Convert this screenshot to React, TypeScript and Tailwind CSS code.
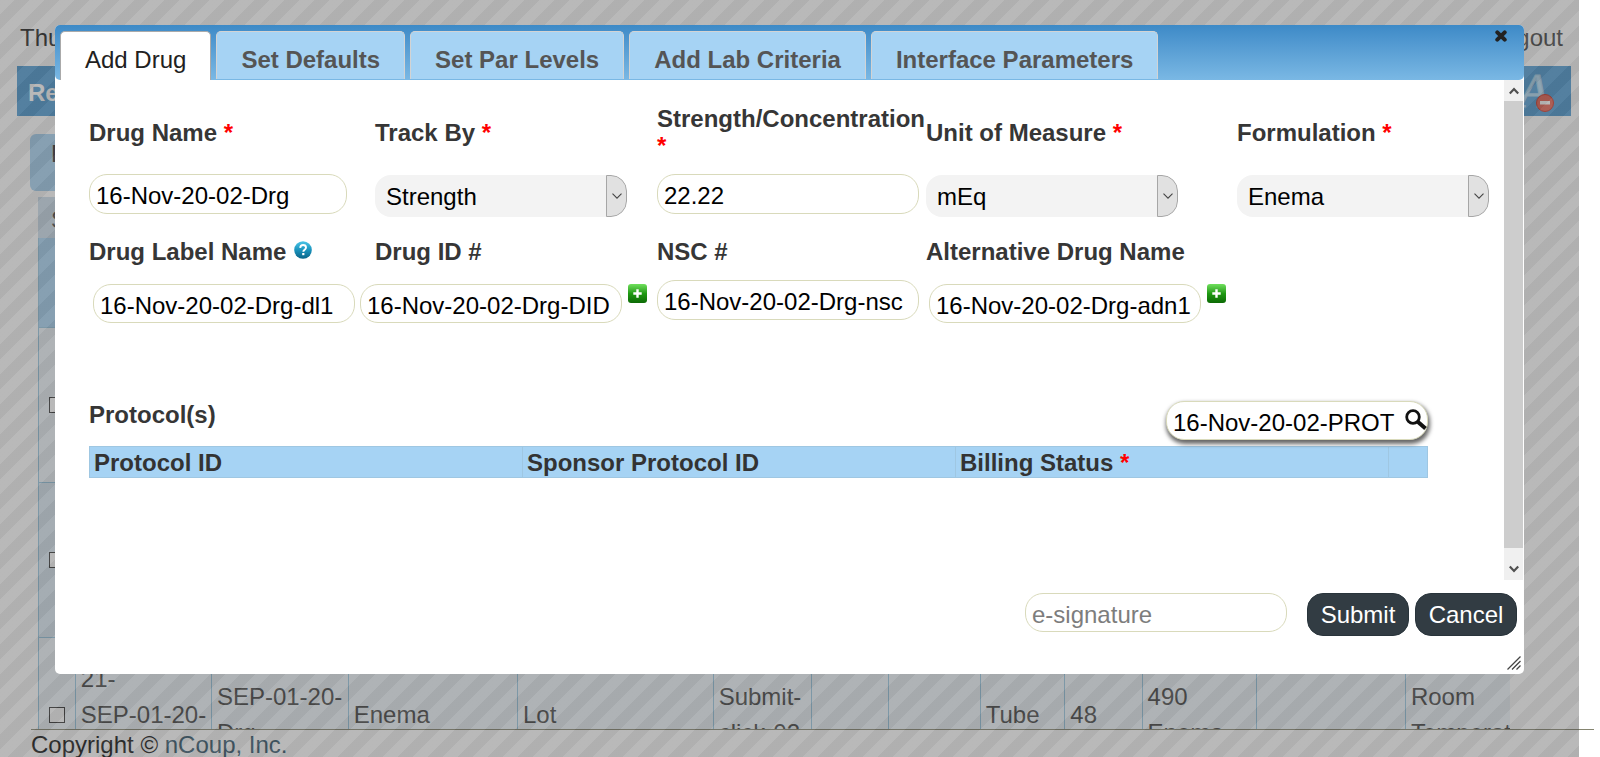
import React from "react";

const inputClass =
  "block rounded-[18px] border border-[#d9dabb] bg-white pl-[6px] pr-1 pt-1 text-2xl leading-[27px] text-black outline-none placeholder:text-[#7d7d7d]";

function Required() {
  return <span className="text-[#ff0000]">*</span>;
}

function SelectBox({ id, value }: { id: string; value: string }) {
  return (
    <div className="relative h-[42px] w-[252px] overflow-hidden rounded-[16px] bg-[#f3f3f3]">
      <select
        id={id}
        defaultValue={value}
        className="h-full w-full appearance-none bg-transparent pl-[11px] pr-6 pt-[2px] text-2xl leading-[27px] text-black outline-none"
      >
        <option>{value}</option>
      </select>
      <span className="pointer-events-none absolute inset-y-0 right-0 flex w-[21px] items-center justify-center rounded-r-[16px] border border-[#a6a6a6] bg-[#e1e1e1]">
        <svg width="10" height="6" viewBox="0 0 10 6" fill="none" stroke="#444" strokeWidth="1.1">
          <path d="M0.5 0.7 5 5.2 9.5 0.7" />
        </svg>
      </span>
    </div>
  );
}

function AddButton({ label }: { label: string }) {
  return (
    <button
      type="button"
      aria-label={label}
      className="flex h-[19px] w-[19px] shrink-0 items-center justify-center rounded-[3px] bg-linear-to-b from-[#6fe05c] via-[#1f9a12] to-[#0d6a06]"
    >
      <svg width="9" height="9" viewBox="0 0 9 9" stroke="#fff" strokeWidth="2.4">
        <path d="M4.5 0.3V8.7M0.3 4.5H8.7" />
      </svg>
    </button>
  );
}

function HelpIcon() {
  return (
    <svg width="18" height="18" viewBox="0 0 18 18" className="shrink-0">
      <defs>
        <linearGradient id="help" x1="0" y1="0" x2="0" y2="1">
          <stop offset="0" stopColor="#4cc6e8" />
          <stop offset="0.5" stopColor="#1a93bd" />
          <stop offset="1" stopColor="#0a6488" />
        </linearGradient>
      </defs>
      <circle cx="9" cy="9" r="8.8" fill="url(#help)" />
      <path d="M6.2 6.9C6.3 4.9 7.5 4 9.1 4c1.7 0 2.9 1 2.9 2.5 0 2.2-2.7 2.1-2.7 4.2" fill="none" stroke="#fff" strokeWidth="1.9" />
      <rect x="8.2" y="12" width="2.2" height="2.2" fill="#fff" />
    </svg>
  );
}

const columns =
  "grid grid-cols-[minmax(0,286fr)_minmax(0,282fr)_minmax(0,269fr)_minmax(0,311fr)_minmax(0,252fr)]";

const labelClass = "text-2xl font-bold leading-[27px] text-[#363636]";

const tabs = ["Add Drug", "Set Defaults", "Set Par Levels", "Add Lab Criteria", "Interface Parameters"];

const columnWidths = [
  "2.5%",
  "9.25%",
  "9.3%",
  "11.5%",
  "13.3%",
  "6.65%",
  "5.3%",
  "6.2%",
  "5.75%",
  "5.25%",
  "7.8%",
  "10.1%",
  "7.1%",
];

const lastRow: string[][] = [
  ["21-", "SEP-01-20-", "Drg"],
  ["SEP-01-20-", "Drg"],
  ["Enema"],
  ["Lot"],
  ["Submit-", "click-02"],
  [""],
  [""],
  ["Tube"],
  ["48"],
  ["490", "Enema"],
  [""],
  ["Room", "Temperature"],
];

function InventoryPage() {
  return (
    <div className="flex h-full flex-col">
      <main className="flex min-h-0 flex-1 flex-col overflow-hidden">
        <div className="flex h-[66px] shrink-0 items-start justify-between pl-5 pr-[37px] pt-6 text-2xl leading-[27px]">
          <span className="text-[#222]">Thu</span>
          <a href="#logout" className="text-[#444]">
            Logout
          </a>
        </div>
        <div className="ml-[17px] mr-[29px] flex h-[50px] shrink-0 items-center justify-between bg-[#4c9ad2] pl-[11px] pr-4">
          <span className="pt-[2px] text-2xl font-bold leading-[27px] text-white">Re</span>
          <svg width="42" height="46" viewBox="0 0 42 46">
            <text x="6" y="39" fontFamily="Liberation Serif, serif" fontStyle="italic" fontSize="48" fill="#b4dcf4" stroke="#a3cde8" strokeWidth="1.2">
              A
            </text>
            <circle cx="32" cy="35" r="8.5" fill="#e85f50" stroke="#d03020" strokeWidth="1" />
            <rect x="27" y="33" width="10" height="3.5" fill="#fff" />
          </svg>
        </div>
        <div className="mb-[6px] ml-[30px] mt-[18px] flex h-[57px] w-[150px] shrink-0 items-start rounded-md bg-[#a6d2f2] pl-[21px] pt-1 text-2xl text-[#333]">
          D
        </div>
        <div className="ml-[38px] mr-[90px] flex h-[41px] shrink-0 items-center bg-[#cbddec] pl-[13px] pt-[3px] text-2xl leading-[27px] text-[#444]">
          S
        </div>
        <div className="ml-[38px] mr-[90px]">
          <table className="w-full table-fixed border-collapse text-2xl leading-9 text-[#444]">
            <colgroup>
              {columnWidths.map((width, i) => (
                <col key={i} style={{ width }} />
              ))}
            </colgroup>
            <thead>
              <tr className="h-[89px] bg-[#a6d2f2]">
                <th colSpan={13} className="border-b border-l border-[#94c4e0]" />
              </tr>
            </thead>
            <tbody>
              {["bg-[#eef5f9]", "bg-[#dbe9f5]", "bg-[#eef5f9]"].map((tone, row) => (
                <tr key={row} className={`h-[155px] ${tone}`}>
                  <td className="border-b border-l border-[#94c4e0] p-0 pl-[10px]">
                    <input
                      type="checkbox"
                      aria-label={`Select row ${row + 1}`}
                      className="block h-4 w-4 appearance-none border border-[#333] bg-white"
                    />
                  </td>
                  {lastRow.map((lines, cell) => (
                    <td key={cell} className="overflow-hidden whitespace-nowrap border-b border-l border-[#94c4e0] p-0 pl-[5px]">
                      {row === 2 && lines.map((line) => <div key={line}>{line}</div>)}
                    </td>
                  ))}
                </tr>
              ))}
            </tbody>
          </table>
        </div>
      </main>
      <footer className="ml-[31px] mr-[6px] h-7 shrink-0 border-t border-[#858570] pt-[1px] text-2xl leading-[27px] text-[#111]">
        Copyright ©{" "}
        <a href="#ncoup" className="text-[#33576c]">
          nCoup, Inc.
        </a>
      </footer>
    </div>
  );
}

function DrugForm() {
  return (
    <div className="min-w-0 flex-1 pl-[34px] pr-[15px] pt-[25px]">
      <div className={`${columns} h-[54px] items-center`}>
        <label htmlFor="drug-name" className={labelClass}>
          Drug Name <Required />
        </label>
        <label htmlFor="track-by" className={labelClass}>
          Track By <Required />
        </label>
        <label htmlFor="strength" className={labelClass}>
          Strength/Concentration <Required />
        </label>
        <label htmlFor="unit" className={labelClass}>
          Unit of Measure <Required />
        </label>
        <label htmlFor="formulation" className={labelClass}>
          Formulation <Required />
        </label>
      </div>
      <div className={`${columns} mt-[15px] h-[43px] items-center`}>
        <input id="drug-name" defaultValue="16-Nov-20-02-Drg" className={`${inputClass} mb-[3px] h-10 w-[258px]`} />
        <SelectBox id="track-by" value="Strength" />
        <input id="strength" defaultValue="22.22" className={`${inputClass} mb-[3px] h-10 w-[262px]`} />
        <SelectBox id="unit" value="mEq" />
        <SelectBox id="formulation" value="Enema" />
      </div>
      <div className={`${columns} mt-[21px]`}>
        <div className="flex items-start gap-2">
          <label htmlFor="label-name" className={labelClass}>
            Drug Label Name
          </label>
          <span className="pt-[3px]">
            <HelpIcon />
          </span>
        </div>
        <label htmlFor="drug-id" className={labelClass}>
          Drug ID #
        </label>
        <label htmlFor="nsc" className={labelClass}>
          NSC #
        </label>
        <label htmlFor="alt-name" className={labelClass}>
          Alternative Drug Name
        </label>
      </div>
      <div className={`${columns} mt-[15px] h-[44px] items-start`}>
        <div className="pl-1 pt-1">
          <input id="label-name" defaultValue="16-Nov-20-02-Drg-dl1" className={`${inputClass} h-[39px] w-[262px]`} />
        </div>
        <div className="-ml-[15px] flex items-start gap-[6px] pt-1">
          <input id="drug-id" defaultValue="16-Nov-20-02-Drg-DID" className={`${inputClass} h-[39px] w-[262px]`} />
          <AddButton label="Add drug ID" />
        </div>
        <input id="nsc" defaultValue="16-Nov-20-02-Drg-nsc" className={`${inputClass} h-10 w-[262px]`} />
        <div className="flex items-start gap-[6px] pl-[3px] pt-1">
          <input id="alt-name" defaultValue="16-Nov-20-02-Drg-adn1" className={`${inputClass} h-[39px] w-[272px]`} />
          <AddButton label="Add alternative drug name" />
        </div>
      </div>
      <section className="mr-[61px] mt-[77px]">
        <div className="flex h-[45px] items-start justify-between">
          <label htmlFor="protocol-search" className={labelClass}>
            Protocol(s)
          </label>
          <div className="relative">
            <input
              id="protocol-search"
              defaultValue="16-Nov-20-02-PROT"
              className={`${inputClass} h-[39px] w-[262px] shadow-[1px_3px_4px_1px_rgba(0,0,0,0.6)]`}
            />
            <svg className="absolute right-0 top-2" width="24" height="22" viewBox="0 0 24 22" fill="none" stroke="#111">
              <circle cx="9" cy="8" r="6.3" strokeWidth="2.8" />
              <path d="M13.5 12.5 21.5 19.5" strokeWidth="4" />
            </svg>
          </div>
        </div>
        <table className="w-full table-fixed border-collapse border border-[#9fc7e2] bg-[#a6d3f4]">
          <thead>
            <tr className="h-[31px] text-left text-2xl leading-[27px] text-[#333]">
              <th className="border border-[#9fc7e2] p-0 pl-1">Protocol ID</th>
              <th className="border border-[#9fc7e2] p-0 pl-1">Sponsor Protocol ID</th>
              <th className="border border-[#9fc7e2] p-0 pl-1">
                Billing Status <Required />
              </th>
              <th className="w-[39px] border border-[#9fc7e2] p-0" />
            </tr>
          </thead>
        </table>
      </section>
    </div>
  );
}

function ScrollBar() {
  return (
    <div className="mr-[1px] flex w-[19px] shrink-0 flex-col bg-[#f0f0f0]">
      <div className="flex h-[21px] items-center justify-center">
        <svg width="10" height="8" viewBox="0 0 10 8" fill="none" stroke="#505050" strokeWidth="2.2">
          <path d="M0.8 6.5 5 2 9.2 6.5" />
        </svg>
      </div>
      <div className="flex-1 bg-[#cdcdcd]" />
      <div className="flex h-8 items-end justify-center pb-[7px]">
        <svg width="10" height="8" viewBox="0 0 10 8" fill="none" stroke="#505050" strokeWidth="2.2">
          <path d="M0.8 1.5 5 6 9.2 1.5" />
        </svg>
      </div>
    </div>
  );
}

export default function App() {
  return (
    <div className="relative h-screen overflow-hidden bg-white font-['Liberation_Sans',Arial,sans-serif]">
      <InventoryPage />
      <div className="absolute inset-y-0 left-0 right-[21px] bg-[repeating-linear-gradient(135deg,rgba(94,94,94,0.434)_0_12.5%,rgba(73,73,73,0.434)_12.5%_25%)] bg-[size:60px_60px]" />
      <div role="dialog" aria-label="Add Drug" className="absolute left-[55px] right-[76px] top-[25px] flex flex-col rounded-[5px] bg-white">
        <div className="relative flex h-[55px] items-start gap-[5px] rounded-[5px] bg-linear-to-b from-[#3d8ac7] to-[#7ab8e4] pl-[5px] pt-[6px]">
          {tabs.map((tab, i) => (
            <button
              key={tab}
              type="button"
              className={
                i === 0
                  ? "h-[49px] rounded-t-[5px] border border-b-0 border-[#aaa] bg-white px-6 pt-[7px] text-2xl leading-[27px] text-[#212121]"
                  : "h-12 rounded-t-[5px] border border-b-0 border-[#d3d3d3] bg-[#a6d3f4] px-6 pt-[7px] text-2xl font-bold leading-[27px] text-[#555]"
              }
            >
              {tab}
            </button>
          ))}
          <button type="button" aria-label="Close" className="absolute right-[17px] top-[5px]">
            <svg width="12" height="12" viewBox="0 0 12 12" stroke="#222" strokeWidth="4" strokeLinecap="round">
              <path d="M2.3 2.3 9.7 9.7M9.7 2.3 2.3 9.7" />
            </svg>
          </button>
        </div>
        <div className="flex h-[500px]">
          <DrugForm />
          <ScrollBar />
        </div>
        <div className="relative flex h-[94px] items-start justify-end pr-[7px] pt-[13px]">
          <input aria-label="e-signature" placeholder="e-signature" className={`${inputClass} mr-5 h-[39px] w-[262px]`} />
          <button type="button" className="mr-[6px] h-[43px] w-[102px] rounded-[16px] border border-[#29343b] bg-[#323c43] text-2xl text-white">
            Submit
          </button>
          <button type="button" className="h-[43px] w-[102px] rounded-[16px] border border-[#29343b] bg-[#323c43] text-2xl text-white">
            Cancel
          </button>
          <svg className="absolute bottom-1 right-[3px]" width="14" height="14" viewBox="0 0 14 14" stroke="#444" strokeWidth="1.3">
            <path d="M0.5 13.5 13.5 0.5M5 13.5 13.5 5M9.5 13.5 13.5 9.5" />
          </svg>
        </div>
      </div>
    </div>
  );
}
